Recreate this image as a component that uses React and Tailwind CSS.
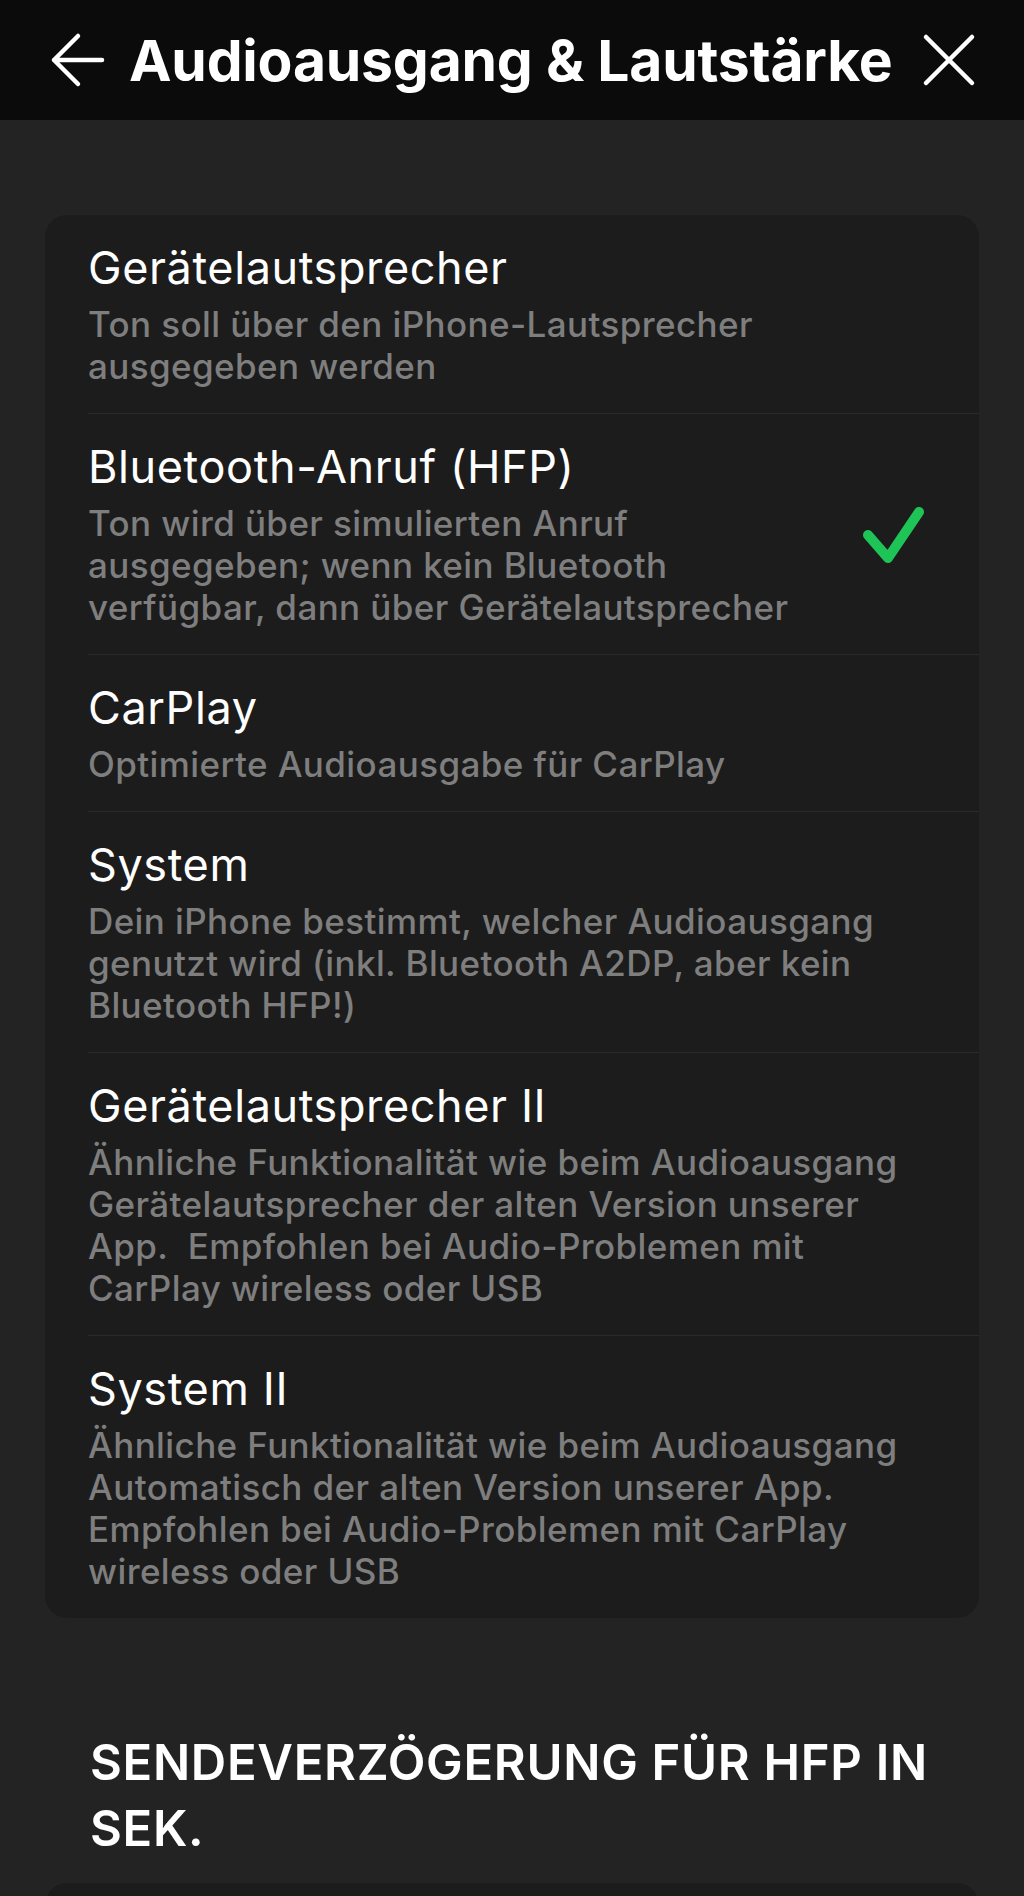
import React from "react";

const options = [
  {
    title: "Gerätelautsprecher",
    lines: ["Ton soll über den iPhone-Lautsprecher", "ausgegeben werden"],
  },
  {
    title: "Bluetooth-Anruf (HFP)",
    lines: [
      "Ton wird über simulierten Anruf",
      "ausgegeben; wenn kein Bluetooth",
      "verfügbar, dann über Gerätelautsprecher",
    ],
    selected: true,
  },
  {
    title: "CarPlay",
    lines: ["Optimierte Audioausgabe für CarPlay"],
  },
  {
    title: "System",
    lines: [
      "Dein iPhone bestimmt, welcher Audioausgang",
      "genutzt wird (inkl. Bluetooth A2DP, aber kein",
      "Bluetooth HFP!)",
    ],
  },
  {
    title: "Gerätelautsprecher II",
    lines: [
      "Ähnliche Funktionalität wie beim Audioausgang",
      "Gerätelautsprecher der alten Version unserer",
      "App.\u00a0 Empfohlen bei Audio-Problemen mit",
      "CarPlay wireless oder USB",
    ],
  },
  {
    title: "System II",
    lines: [
      "Ähnliche Funktionalität wie beim Audioausgang",
      "Automatisch der alten Version unserer App.",
      "Empfohlen bei Audio-Problemen mit CarPlay",
      "wireless oder USB",
    ],
  },
];

function BackArrow() {
  return (
    <svg width="56" height="56" viewBox="0 0 56 56" fill="none" className="shrink-0">
      <path
        d="M53 28H5M29 4L5 28l24 24"
        stroke="white"
        strokeWidth="4.5"
        strokeLinecap="round"
        strokeLinejoin="round"
      />
    </svg>
  );
}

function CloseIcon() {
  return (
    <svg width="56" height="56" viewBox="0 0 56 56" fill="none" className="shrink-0">
      <path
        d="M5 5l46 46M51 5L5 51"
        stroke="white"
        strokeWidth="4.5"
        strokeLinecap="round"
      />
    </svg>
  );
}

function Check() {
  return (
    <svg width="64" height="56" viewBox="0 0 64 56" fill="none" className="shrink-0">
      <path
        d="M7 28l20 23L58 5"
        stroke="#1fc456"
        strokeWidth="10"
        strokeLinecap="round"
        strokeLinejoin="round"
      />
    </svg>
  );
}

function OptionRow({ option, last }) {
  return (
    <div className="flex items-center pl-[43px]">
      <div
        className={
          "flex flex-1 items-center pr-[43px] pt-[28px] pb-[26px] " +
          (last ? "" : "border-b border-[#2a2a2a]")
        }
      >
        <div className="flex-1">
          <div className="text-[45px] leading-[50px] text-white tracking-[0.6px]">
            {option.title}
          </div>
          <div className="mt-[10px] text-[35px] leading-[42px] font-medium text-[#7e7e7e] tracking-[0.4px]">
            {option.lines.map((line) => (
              <div key={line} className="whitespace-nowrap">
                {line}
              </div>
            ))}
          </div>
        </div>
        {option.selected && (
          <div className="mr-[11px]">
            <Check />
          </div>
        )}
      </div>
    </div>
  );
}

export default function App() {
  return (
    <div
      className="min-h-[1896px] bg-[#232323]"
      style={{ fontFamily: "Inter, 'Noto Sans', sans-serif" }}
    >
      <header className="flex h-[120px] items-center bg-[#0b0b0b] pl-[49px] pr-[47px]">
        <BackArrow />
        <h1 className="ml-[24px] flex-1 whitespace-nowrap text-[57px] font-bold leading-none text-white tracking-[-0.2px]">
          Audioausgang &amp; Lautstärke
        </h1>
        <CloseIcon />
      </header>

      <div className="px-[45px] pt-[95px]">
        <div className="overflow-hidden rounded-[22px] bg-[#1c1c1c]">
          {options.map((option, i) => (
            <OptionRow key={option.title} option={option} last={i === options.length - 1} />
          ))}
        </div>

        <h2 className="mt-[112px] pl-[45px] text-[49px] font-semibold leading-[66px] text-white tracking-[0.7px]">
          SENDEVERZÖGERUNG FÜR HFP IN
          <br />
          SEK.
        </h2>

        <div className="mt-[21px] h-[60px] rounded-t-[22px] bg-[#1c1c1c]" />
      </div>
    </div>
  );
}
